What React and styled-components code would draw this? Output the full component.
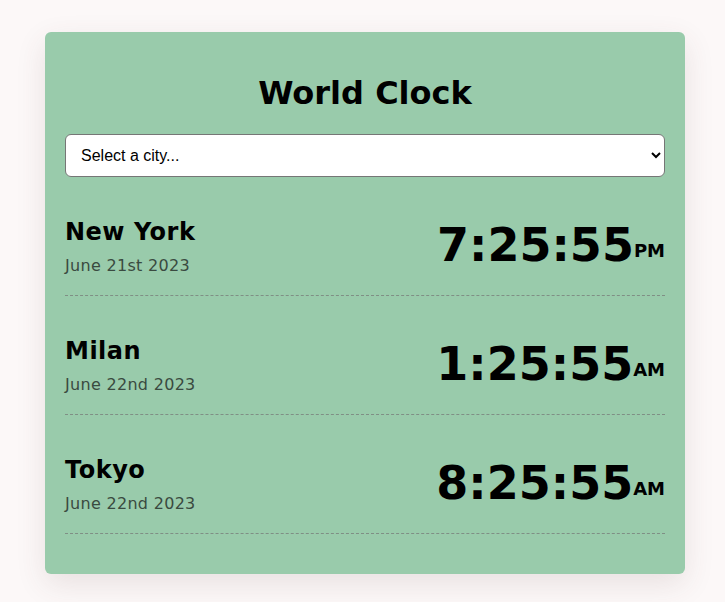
import React from "react";
import styled, { createGlobalStyle } from "styled-components";

const Global = createGlobalStyle`
  html, body { margin: 0; padding: 0; }
  body {
    background: #fcf8f8;
    font-family: "DejaVu Sans", Verdana, sans-serif;
    color: #000;
  }
`;

const Page = styled.div`
  padding: 32px 40px 28px 45px;
`;

const Card = styled.main`
  width: 640px;
  box-sizing: border-box;
  background: #99cbab;
  border-radius: 6px;
  padding: 20px 20px 40px;
  box-shadow: 0 10px 30px rgba(90, 60, 60, 0.12);
`;

const Title = styled.h1`
  margin: 23px 0 22px;
  font-size: 32px;
  line-height: 37px;
  font-weight: bold;
  text-align: center;
`;

const Select = styled.select`
  display: block;
  width: 100%;
  height: 43px;
  box-sizing: border-box;
  padding: 0 8px 0 11px;
  font-family: "Liberation Sans", Arial, sans-serif;
  font-size: 16px;
  color: #000;
  background: #fff;
  border: 1px solid #767676;
  border-radius: 6px;
`;

const Row = styled.div`
  display: flex;
  justify-content: space-between;
  align-items: flex-start;
  margin-top: 21px;
  padding: 20px 0;
  border-bottom: 1px dashed #7f8f85;
`;

const Info = styled.div`
  display: flex;
  flex-direction: column;
`;

const City = styled.div`
  font-size: 24px;
  line-height: 28px;
  font-weight: bold;
  letter-spacing: 0.5px;
`;

const DateText = styled.div`
  margin-top: 10px;
  font-size: 16px;
  line-height: 19px;
  letter-spacing: 0.3px;
  color: #3a4a40;
`;

const Time = styled.div`
  font-size: 46px;
  line-height: 54px;
  height: 54px;
  font-weight: bold;
  white-space: nowrap;
`;

const Suffix = styled.span`
  font-size: 18px;
  line-height: 0;
  vertical-align: 4px;
`;

const clocks = [
  { city: "New York", date: "June 21st 2023", time: "7:25:55", suffix: "PM" },
  { city: "Milan", date: "June 22nd 2023", time: "1:25:55", suffix: "AM" },
  { city: "Tokyo", date: "June 22nd 2023", time: "8:25:55", suffix: "AM" },
];

export default function App() {
  return (
    <>
      <Global />
      <Page>
        <Card>
          <Title>World Clock</Title>
          <Select defaultValue="">
            <option value="">Select a city...</option>
            <option value="london">London</option>
            <option value="paris">Paris</option>
            <option value="sydney">Sydney</option>
          </Select>
          {clocks.map((c) => (
            <Row key={c.city}>
              <Info>
                <City>{c.city}</City>
                <DateText>{c.date}</DateText>
              </Info>
              <Time>
                {c.time}
                <Suffix>{c.suffix}</Suffix>
              </Time>
            </Row>
          ))}
        </Card>
      </Page>
    </>
  );
}
